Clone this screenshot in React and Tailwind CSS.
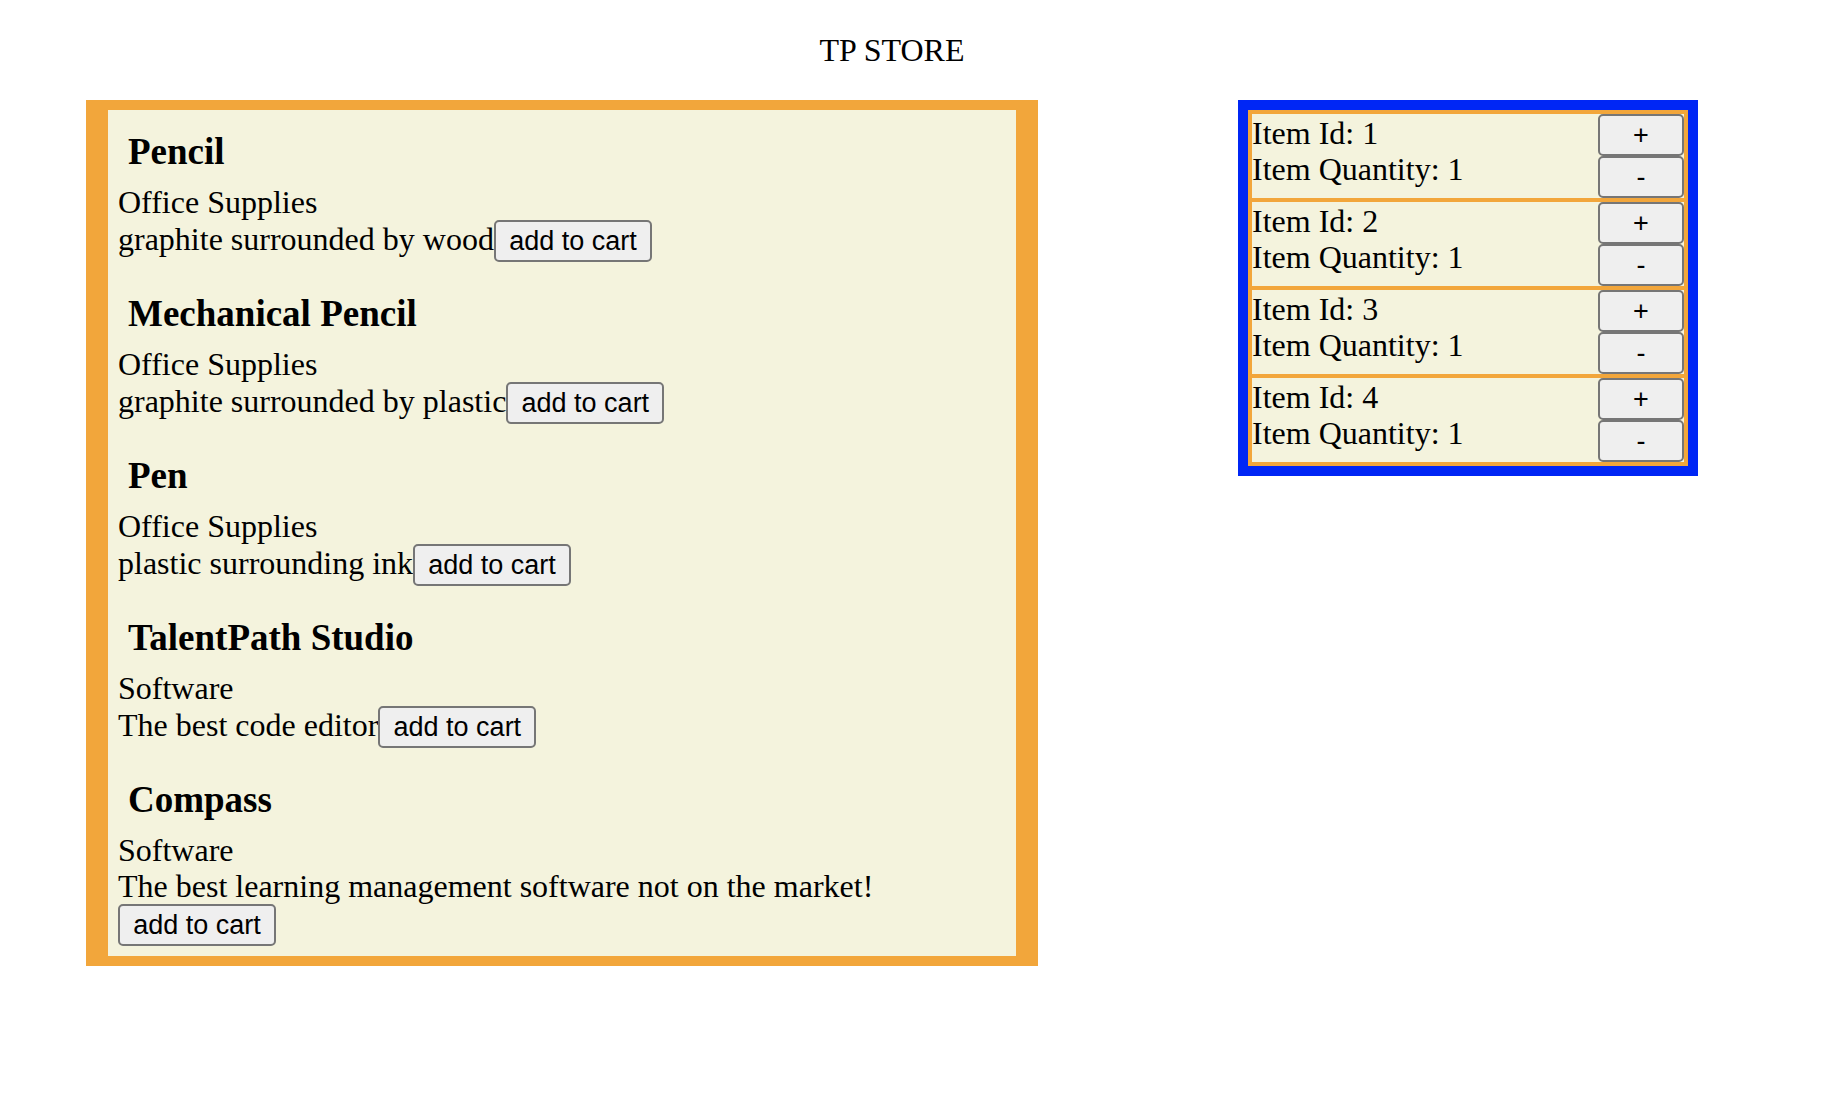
const products = [
  { name: "Pencil", category: "Office Supplies", description: "graphite surrounded by wood" },
  { name: "Mechanical Pencil", category: "Office Supplies", description: "graphite surrounded by plastic" },
  { name: "Pen", category: "Office Supplies", description: "plastic surrounding ink" },
  { name: "TalentPath Studio", category: "Software", description: "The best code editor" },
  {
    name: "Compass",
    category: "Software",
    description: "The best learning management software not on the market!",
  },
];

const cartItems = [
  { id: 1, quantity: 1 },
  { id: 2, quantity: 1 },
  { id: 3, quantity: 1 },
  { id: 4, quantity: 1 },
];

const buttonStyle =
  "h-[42px] rounded-[5px] border-2 border-[#767676] bg-[#efefef] font-['Liberation_Sans',Arial,sans-serif] text-[27px] leading-[36px] text-black";

function Product({ name, category, description }) {
  return (
    <article className="p-[10px]">
      <h2 className="m-[10px] text-[37px] leading-[44px] font-bold">{name}</h2>
      <p>{category}</p>
      <div className="flex flex-wrap items-baseline">
        <p>{description}</p>
        <button type="button" className={`${buttonStyle} w-[158px] whitespace-nowrap`}>
          add to cart
        </button>
      </div>
    </article>
  );
}

function CartItem({ id, quantity }) {
  return (
    <li className="flex justify-between border-b-4 border-[#f2a63b] bg-[#f4f3dd] last:border-b-0">
      <div className="pt-px">
        <p>Item Id: {id}</p>
        <p>Item Quantity: {quantity}</p>
      </div>
      <div className="flex w-[86px] flex-col">
        <button type="button" aria-label={`Add one of item ${id}`} className={buttonStyle}>
          +
        </button>
        <button type="button" aria-label={`Remove one of item ${id}`} className={buttonStyle}>
          -
        </button>
      </div>
    </li>
  );
}

export default function App() {
  return (
    <div className="min-h-screen bg-white pr-[38px] font-['Liberation_Serif','Times_New_Roman',serif] text-[32px] leading-[36px] text-black">
      <header className="py-8 text-center">
        <h1>TP STORE</h1>
      </header>
      <main className="grid grid-cols-[238fr_115fr] items-start gap-[200px] px-[86px]">
        <section className="border-x-[22px] border-y-[10px] border-[#f2a63b] bg-[#f4f3dd]">
          {products.map((product) => (
            <Product key={product.name} {...product} />
          ))}
        </section>
        <section className="border-[10px] border-[#0026f5]">
          <ul className="border-4 border-[#f2a63b]">
            {cartItems.map((item) => (
              <CartItem key={item.id} {...item} />
            ))}
          </ul>
        </section>
      </main>
    </div>
  );
}
